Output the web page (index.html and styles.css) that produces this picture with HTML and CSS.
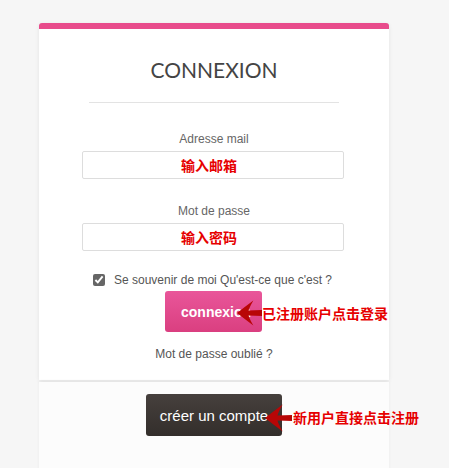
FILE: index.html
```html
<!DOCTYPE html>
<html lang="fr">
<head>
  <meta charset="UTF-8" />
  <title>Connexion</title>
  <link rel="stylesheet" href="styles.css">
</head>
<body>

  <div class="login-box">
    <div class="card">
      <h1 class="title">CONNEXION</h1>
      <hr>

      <div class="field">
        <label>Adresse mail</label>
        <div class="input"><span class="note">输入邮箱</span></div>
      </div>

      <div class="field">
        <label>Mot de passe</label>
        <div class="input"><span class="note">输入密码</span></div>
      </div>

      <div class="remember">
        <input type="checkbox" checked>
        <span>Se souvenir de moi Qu'est-ce que c'est ?</span>
      </div>

      <div class="btn-row">
        <div class="btn-wrap">
          <button class="btn btn-pink">connexion</button>
          <svg class="arrow arrow-login" viewBox="0 0 26 26" width="25" height="26">
            <path d="M0 13 Q9 6 17 0 Q13 7 12 10.5 L26 10 L26 16 L12 15.5 Q13 19 17 26 Q9 20 0 13 Z" />
          </svg>
          <span class="hint hint-login">已注册账户点击登录</span>
        </div>
      </div>

      <p class="forgot">Mot de passe oublié ?</p>
    </div>

    <div class="signup">
      <div class="btn-wrap">
        <button class="btn btn-dark">créer un compte</button>
        <svg class="arrow arrow-signup" viewBox="0 0 26 26" width="27" height="28">
          <path d="M0 13 Q9 6 17 0 Q13 7 12 10.5 L26 10 L26 16 L12 15.5 Q13 19 17 26 Q9 20 0 13 Z" />
        </svg>
        <span class="hint hint-signup">新用户直接点击注册</span>
      </div>
    </div>
  </div>

</body>
</html>
```

FILE: styles.css
```css
*, *::before, *::after {
  box-sizing: border-box;
}

body {
  margin: 0;
  background: #f6f6f6;
  font-family: Arial, 'Liberation Sans', 'Noto Sans CJK SC', sans-serif;
  color: #555;
  height: 468px;
  overflow: hidden;
}

.login-box {
  width: 350px;
  margin: 23px 0 0 39px;
}

.card {
  background: #fff;
  border-top: 6px solid #e84b8b;
  border-radius: 3px 3px 0 0;
  box-shadow: 0 1px 4px rgba(0, 0, 0, 0.08);
  padding: 26px 0 19px;
  text-align: center;
}

.title {
  margin: 0;
  font-family: Lato, sans-serif;
  font-weight: 400;
  font-size: 21px;
  line-height: 30px;
  color: #444;
}

hr {
  width: 250px;
  margin: 17px auto 0;
  border: none;
  border-top: 1px solid #e3e3e3;
}

.field {
  margin-top: 29px;
}

.field + .field {
  margin-top: 25px;
}

.field label {
  display: block;
  font-size: 12px;
  line-height: 14px;
  color: #666;
  margin-bottom: 5px;
}

.input {
  width: 262px;
  height: 28px;
  margin-left: 43px;
  border: 1px solid #ddd;
  border-radius: 2px;
  background: #fff;
  display: flex;
  align-items: center;
  justify-content: center;
}

.note {
  color: #e60000;
  font-weight: bold;
  font-size: 14px;
  font-family: 'Noto Sans CJK SC', sans-serif;
  margin-left: -8px;
}

.remember {
  display: flex;
  align-items: center;
  gap: 9px;
  margin: 22px 0 0 54px;
  font-size: 12px;
  color: #555;
}

.remember input {
  margin: 0;
  width: 12px;
  height: 12px;
  accent-color: #666;
}

.btn-row {
  display: flex;
  padding-left: 126px;
  margin-top: 4px;
}

.btn-wrap {
  position: relative;
}

.btn {
  border: none;
  border-radius: 3px;
  color: #fff;
  font-family: Arial, 'Liberation Sans', sans-serif;
  cursor: pointer;
  display: block;
}

.btn-pink {
  width: 97px;
  height: 41px;
  background: linear-gradient(#e9569a, #da3f80);
  font-size: 14px;
  font-weight: bold;
  padding: 0 0 0 16px;
  text-align: left;
}

.btn-dark {
  width: 136px;
  height: 42px;
  background: linear-gradient(#46403d, #332e2b);
  font-size: 15px;
  padding: 0;
}

.arrow {
  position: absolute;
  fill: #b80606;
}

.arrow-login {
  left: 72px;
  top: 9px;
}

.arrow-signup {
  left: 119px;
  top: 10px;
}

.hint {
  position: absolute;
  white-space: nowrap;
  color: #e60000;
  font-weight: bold;
  font-size: 14px;
  font-family: 'Noto Sans CJK SC', sans-serif;
}

.hint-login {
  left: 97px;
  top: 12px;
}

.hint-signup {
  left: 147px;
  top: 13px;
}

.forgot {
  margin: 15px 0 0;
  font-size: 12px;
  color: #555;
}

.signup {
  margin-top: 2px;
  background: #fcfcfc;
  height: 90px;
  padding: 12px 0 0 107px;
  box-shadow: 0 -1px 3px rgba(0, 0, 0, 0.05);
}
```
